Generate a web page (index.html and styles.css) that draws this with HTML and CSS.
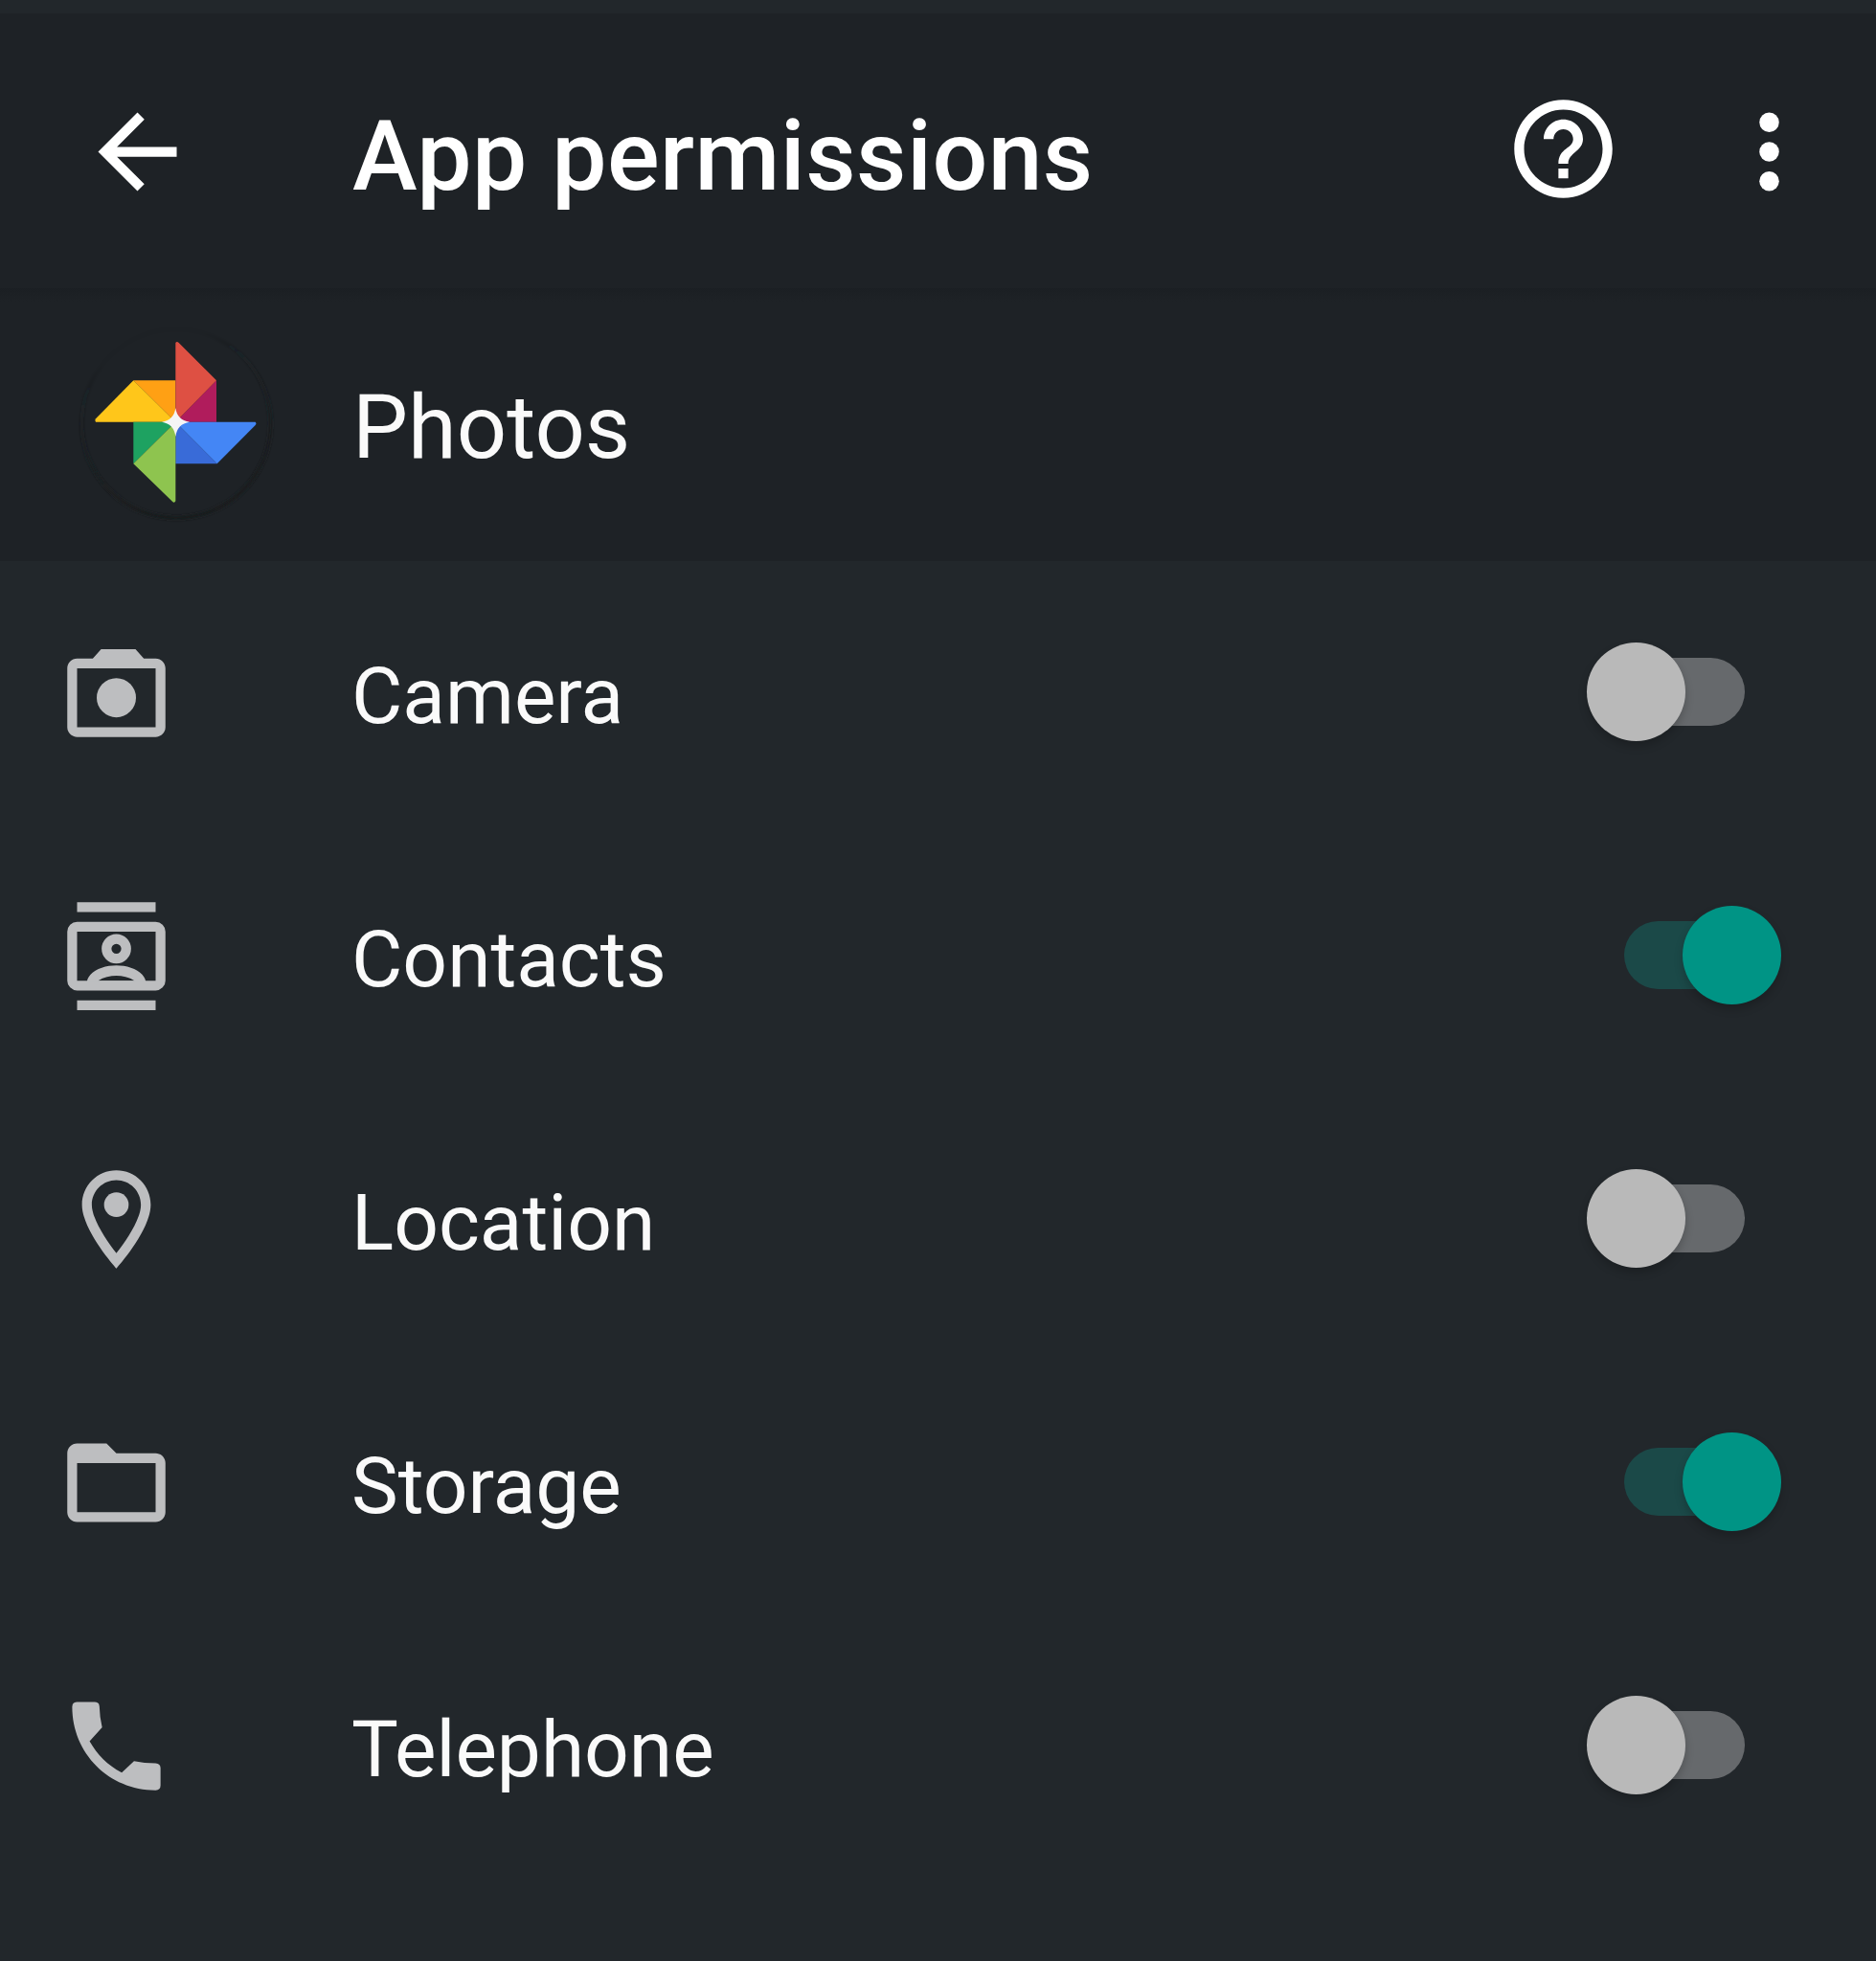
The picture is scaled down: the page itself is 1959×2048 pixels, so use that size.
FILE: index.html
```html
<!DOCTYPE html>
<html lang="en">
<head>
<meta charset="utf-8">
<title>App permissions</title>
<link rel="stylesheet" href="styles.css">
</head>
<body>
<div class="screen">
  <header class="appbar">
    <svg class="icon back" viewBox="0 0 24 24"><path d="M20 11H7.83l5.59-5.59L12 4l-8 8 8 8 1.41-1.41L7.83 13H20v-2z"/></svg>
    <h1 class="title">App permissions</h1>
    <svg class="icon help" viewBox="0 0 24 24"><path d="M11 18h2v-2h-2v2zm1-16C6.48 2 2 6.48 2 12s4.48 10 10 10 10-4.48 10-10S17.52 2 12 2zm0 18c-4.41 0-8-3.59-8-8s3.59-8 8-8 8 3.59 8 8-3.59 8-8 8zm0-14c-2.21 0-4 1.79-4 4h2c0-1.1.9-2 2-2s2 .9 2 2c0 2-3 1.750-3 5h2c0-2.250 3-2.500 3-5 0-2.210-1.790-4-4-4z"/></svg>
    <svg class="icon more" viewBox="0 0 24 24"><circle cx="12" cy="6" r="2"/><circle cx="12" cy="12" r="2"/><circle cx="12" cy="18" r="2"/></svg>
  </header>
  <section class="app">
    <svg class="logo" viewBox="0 0 720 690">
      <defs>
        <linearGradient id="rim" x1="0" y1="0" x2="0.3" y2="1">
          <stop offset=".2" stop-color="#171b1d" stop-opacity=".05"/>
          <stop offset="1" stop-color="#171b1d"/>
        </linearGradient>
        <filter id="soft"><feGaussianBlur stdDeviation="4"/></filter>
      </defs>
      <circle cx="342" cy="337" r="296" fill="none" stroke="url(#rim)" stroke-width="11" filter="url(#soft)"/>
      <path fill="#ffa014" d="M208 202H340V332Z"/>
      <path fill="#ffc61a" d="M208 202L340 332H90Q86 328 90 322Z"/>
      <path fill="#b01c5c" d="M468 202V332H340Z"/>
      <path fill="#de5043" d="M340 332V84Q344 78 350 84L468 202Z"/>
      <path fill="#396bd8" d="M340 332V463H470Z"/>
      <path fill="#4486f5" d="M340 332H590Q594 336 590 342L470 463Z"/>
      <path fill="#1ea261" d="M208 332H340L208 463Z"/>
      <path fill="#8ec44f" d="M340 332V580Q336 588 330 581L208 463Z"/>
      <path fill="#f5f5f5" d="M340 288Q345 326 384 332Q345 338 340 378Q335 338 297 332Q335 326 340 288Z"/>
    </svg>
    <h2 class="name">Photos</h2>
  </section>
  <main class="list">
    <div class="row">
      <svg class="icon" viewBox="0 0 24 24"><path fill-rule="evenodd" d="M20 5h-2.400L15.900 3.100H8.900L7.200 5H4c-1.100 0-2 .9-2 2v12c0 1.100.9 2 2 2h16c1.100 0 2-.9 2-2V7c0-1.100-.9-2-2-2zM4 7V19H20V7z"/><circle cx="12" cy="13" r="4"/></svg>
      <span class="label">Camera</span><span class="switch"></span>
    </div>
    <div class="row">
      <svg class="icon" viewBox="0 0 24 24"><path d="M4 1H20V3H4zM4 21H20V23H4z"/><path fill-rule="evenodd" d="M4 5H20a2 2 0 0 1 2 2V17a2 2 0 0 1-2 2H4a2 2 0 0 1-2-2V7a2 2 0 0 1 2-2zM4 7V17H20V7z"/><circle class="line" cx="12" cy="10.500" r="2"/><path fill-rule="evenodd" d="M6 17.200C6.400 15 9.400 13.900 12 13.900S17.600 15 18 17.200zM8.300 17H15.700C14.600 16.300 13.200 16 12 16S9.400 16.300 8.300 17z"/></svg>
      <span class="label">Contacts</span><span class="switch on"></span>
    </div>
    <div class="row">
      <svg class="icon" viewBox="0 0 24 24"><path fill-rule="evenodd" d="M12 2C8.130 2 5 5.130 5 9c0 5.250 7 13 7 13s7-7.750 7-13c0-3.870-3.130-7-7-7zM7 9c0-2.760 2.240-5 5-5s5 2.240 5 5c0 2.880-2.880 7.190-5 9.880C9.920 16.210 7 11.850 7 9z"/><circle cx="12" cy="9" r="2.500"/></svg>
      <span class="label">Location</span><span class="switch"></span>
    </div>
    <div class="row">
      <svg class="icon" viewBox="0 0 24 24"><path fill-rule="evenodd" d="M20 6h-8l-2-2H4c-1.100 0-2 .9-2 2v12c0 1.100.9 2 2 2h16c1.100 0 2-.9 2-2V8c0-1.100-.9-2-2-2zM4 8H20V18H4z"/></svg>
      <span class="label">Storage</span><span class="switch on"></span>
    </div>
    <div class="row">
      <svg class="icon" viewBox="0 0 24 24"><path d="M4 3H7.600Q8.500 3 8.550 3.900Q8.600 6.200 9.100 8.200L6.550 11C8.100 13.700 10.200 15.900 13.100 17.400L15.600 15.050Q17.700 15.500 20 15.500Q21 15.600 21 16.500V20Q21 21 20 21C10.500 21 3 13.500 3 4Q3 3 4 3Z"/></svg>
      <span class="label">Telephone</span><span class="switch"></span>
    </div>
  </main>
</div>
</body>
</html>
```
FILE: styles.css
```css
* { box-sizing: border-box; }
body {
  margin: 0;
  background: #22272b;
  font-family: Roboto, "Liberation Sans", sans-serif;
  color: #fafafa;
}
.screen {
  width: 1959px;
  height: 2048px;
  padding-top: 14px;
  overflow: hidden;
}
.icon {
  flex: none;
  width: 123px;
  height: 123px;
  fill: currentColor;
}
.line { fill: none; stroke: currentColor; stroke-width: 2; }
.appbar {
  display: flex;
  align-items: center;
  height: 287px;
  padding: 2px 50px 0 82px;
  background: #1e2226;
  color: #fff;
}
.title {
  flex: 1;
  margin: 8px 0 0 163px;
  font-size: 102px;
  line-height: 120px;
  font-weight: 500;
  letter-spacing: .4px;
  white-space: nowrap;
}
.help { margin: 0 92px 6px 0; }
.app {
  display: flex;
  align-items: center;
  height: 285px;
  padding-left: 70px;
  background: linear-gradient(#1b1f23, #1e2226 14px);
}
.logo { flex: none; width: 240px; height: 230px; margin-top: 3px; }
.name {
  margin: 7px 0 0 58px;
  font-size: 92px;
  line-height: 110px;
  font-weight: 400;
}
.row {
  display: flex;
  align-items: center;
  height: 275px;
  padding: 0 137px 0 60px;
  color: #bdbec0;
}
.label {
  flex: 1;
  margin: 7px 0 0 184px;
  font-size: 82px;
  line-height: 100px;
  color: #fafafa;
}
.switch {
  position: relative;
  width: 126px;
  height: 71px;
  margin-bottom: 2px;
  border-radius: 36px;
  background: #66696c;
}
.switch::after {
  content: "";
  position: absolute;
  top: -16px;
  left: -39px;
  width: 103px;
  height: 103px;
  border-radius: 50%;
  background: #b9b9b9;
  box-shadow: 0 5px 10px rgba(0, 0, 0, .2);
}
.switch.on { background: #1b4948; }
.switch.on::after { left: 61px; background: #009485; }
```
